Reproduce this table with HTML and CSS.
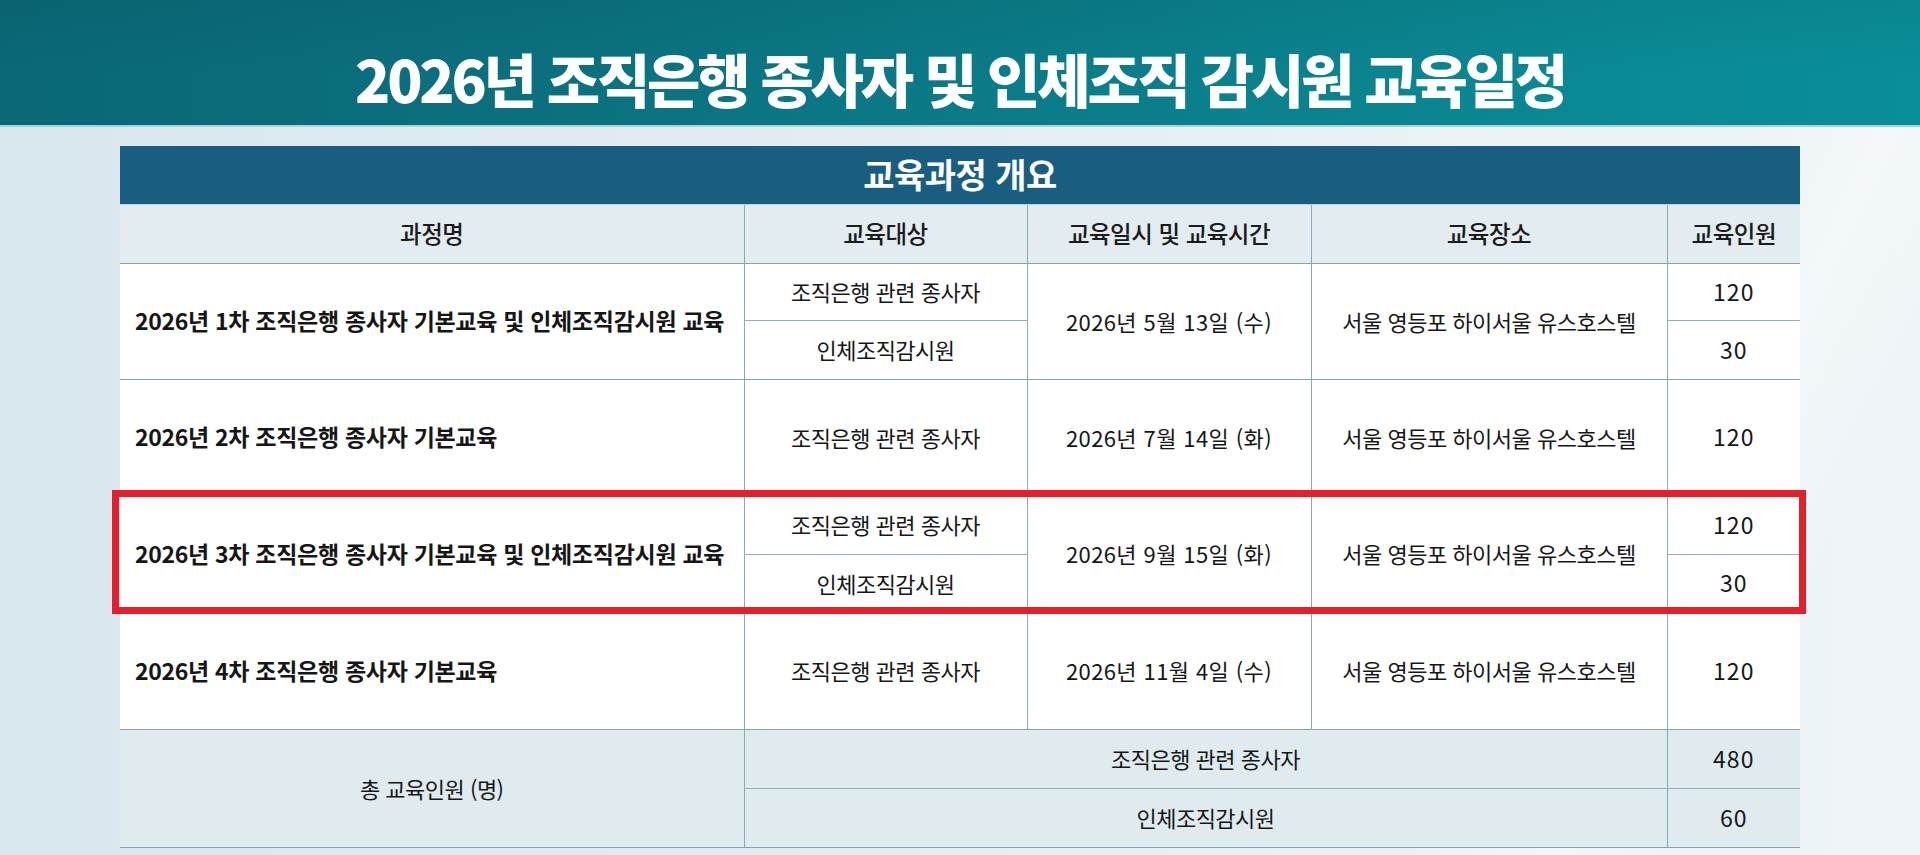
FILE: index.html
```html
<!DOCTYPE html>
<html lang="ko">
<head>
<meta charset="utf-8">
<title>2026년 조직은행 종사자 및 인체조직 감시원 교육일정</title>
<link rel="stylesheet" href="styles.css">
</head>
<body>
<header class="banner">
  <h1 class="banner-title">2026년 조직은행 종사자 및 인체조직 감시원 교육일정</h1>
</header>
<main class="content">
  <div class="table-wrap">
    <table class="schedule">
      <colgroup>
        <col class="w-name">
        <col class="w-target">
        <col class="w-date">
        <col class="w-place">
        <col class="w-count">
      </colgroup>
      <thead>
        <tr class="row-caption">
          <th colspan="5" class="caption-cell">교육과정 개요</th>
        </tr>
        <tr class="row-head">
          <th class="c1">과정명</th>
          <th>교육대상</th>
          <th>교육일시 및 교육시간</th>
          <th>교육장소</th>
          <th>교육인원</th>
        </tr>
      </thead>
      <tbody>
        <tr class="row-a1">
          <td rowspan="2" class="c1 course">2026년 1차 조직은행 종사자 기본교육 및 인체조직감시원 교육</td>
          <td class="sub-top">조직은행 관련 종사자</td>
          <td rowspan="2" class="date">2026년 5월 13일 (수)</td>
          <td rowspan="2">서울 영등포 하이서울 유스호스텔</td>
          <td class="sub-top num">120</td>
        </tr>
        <tr class="row-b1">
          <td>인체조직감시원</td>
          <td class="num">30</td>
        </tr>
        <tr class="row-single2">
          <td class="c1 course">2026년 2차 조직은행 종사자 기본교육</td>
          <td>조직은행 관련 종사자</td>
          <td class="date">2026년 7월 14일 (화)</td>
          <td>서울 영등포 하이서울 유스호스텔</td>
          <td class="num">120</td>
        </tr>
        <tr class="row-a3">
          <td rowspan="2" class="c1 course">2026년 3차 조직은행 종사자 기본교육 및 인체조직감시원 교육</td>
          <td class="sub-top">조직은행 관련 종사자</td>
          <td rowspan="2" class="date">2026년 9월 15일 (화)</td>
          <td rowspan="2">서울 영등포 하이서울 유스호스텔</td>
          <td class="sub-top num">120</td>
        </tr>
        <tr class="row-b3">
          <td>인체조직감시원</td>
          <td class="num">30</td>
        </tr>
        <tr class="row-single4">
          <td class="c1 course">2026년 4차 조직은행 종사자 기본교육</td>
          <td>조직은행 관련 종사자</td>
          <td class="date">2026년 11월 4일 (수)</td>
          <td>서울 영등포 하이서울 유스호스텔</td>
          <td class="num">120</td>
        </tr>
      </tbody>
      <tfoot>
        <tr class="row-total-a">
          <td rowspan="2" class="c1 total-label">총 교육인원 (명)</td>
          <td colspan="3" class="sub-top">조직은행 관련 종사자</td>
          <td class="sub-top num">480</td>
        </tr>
        <tr class="row-total-b">
          <td colspan="3">인체조직감시원</td>
          <td class="num">60</td>
        </tr>
      </tfoot>
    </table>
    <div class="highlight" aria-hidden="true"></div>
  </div>
</main>
</body>
</html>
```
FILE: styles.css
```css
html, body {
  margin: 0;
  padding: 0;
}

body {
  width: 1920px;
  min-height: 855px;
  font-family: "Noto Sans CJK KR", "Noto Sans", sans-serif;
  color: #161616;
  background:
    linear-gradient(115deg, rgba(255,255,255,0) 0%, rgba(255,255,255,0) 78%, rgba(255,255,255,0.35) 84%, rgba(255,255,255,0) 90%),
    linear-gradient(90deg, #d9e7ee 0%, #e2edf2 45%, #eaf2f6 75%, #eef4f7 100%);
  overflow: hidden;
}

.banner {
  height: 125px;
  border-bottom: 2px solid #a3d4dc;
  background:
    linear-gradient(180deg, rgba(0,0,0,0.05) 0%, rgba(0,0,0,0) 60%),
    linear-gradient(90deg, #0a6877 0%, #0b717f 30%, #0a7f8b 60%, #0a8a95 85%, #0a8e98 100%);
  display: flex;
  justify-content: center;
  align-items: flex-start;
}

.banner-title {
  margin: 0;
  padding-top: 49px;
  color: #ffffff;
  font-size: 58px;
  font-weight: 900;
  line-height: 1;
  letter-spacing: -3.2px;
}

.content {
  padding: 19px 120px 0;
}

.table-wrap {
  position: relative;
}

.schedule {
  width: 1680px;
  border-collapse: collapse;
  table-layout: fixed;
}

.w-name { width: 624px; }
.w-target { width: 283px; }
.w-date { width: 284px; }
.w-place { width: 356px; }
.w-count { width: 133px; }

.schedule th,
.schedule td {
  padding: 0;
  text-align: center;
  vertical-align: middle;
  border-top: 1px solid #84a2b0;
  border-bottom: 1px solid #84a2b0;
  border-left: 1px solid #8aa8b5;
  font-size: 22px;
  line-height: 1.2;
  letter-spacing: -0.5px;
}

.schedule .c1 {
  border-left: none;
}

.schedule td.num {
  font-size: 23px;
  letter-spacing: 1px;
}

.schedule td.date {
  letter-spacing: 0.4px;
}

.row-caption {
  height: 58px;
}

.schedule th.caption-cell {
  background: #195e80;
  color: #ffffff;
  font-size: 34px;
  font-weight: 700;
  letter-spacing: -0.5px;
  border: none;
  border-bottom: 1px solid #b9d6e2;
}

.row-head {
  height: 59px;
}

.row-head th {
  background: #e2ecf1;
  font-weight: 500;
  font-size: 23.5px;
  color: #1b1b1b;
  border-top: none;
}

.schedule tbody td {
  background: #ffffff;
}

.row-a1 { height: 57px; }
.row-b1 { height: 59px; }
.row-single2 { height: 116px; }
.row-a3 { height: 59px; }
.row-b3 { height: 58px; }
.row-single4 { height: 117px; }
.row-total-a { height: 59px; }
.row-total-b { height: 59px; }

.schedule td.sub-top {
  border-bottom-color: #93adb9;
}

.schedule td.course {
  text-align: left;
  padding-left: 15px;
  font-weight: 700;
  font-size: 23px;
  letter-spacing: -0.3px;
}

.schedule tfoot td {
  background: #e0ebf0;
}

.highlight {
  position: absolute;
  left: -8px;
  top: 344px;
  width: 1694px;
  height: 124px;
  box-sizing: border-box;
  border: 7px solid #e5202b;
  pointer-events: none;
}
```
